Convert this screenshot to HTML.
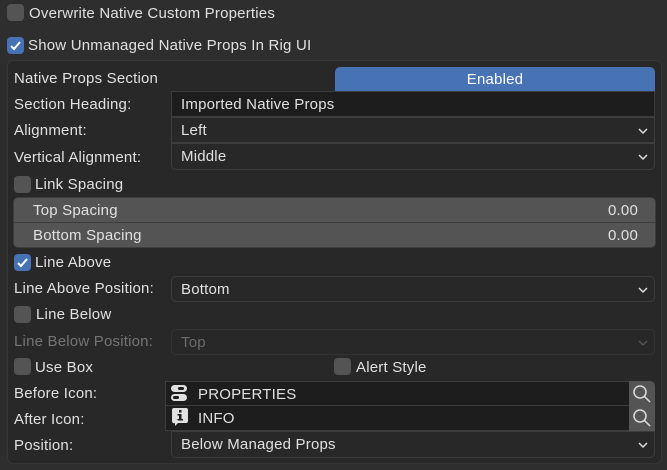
<!DOCTYPE html>
<html><head><style>
body{margin:0;width:667px;height:470px;background:#2e2e2e;font-family:"Liberation Sans",sans-serif;font-size:15px;letter-spacing:0.2px;color:#e0e0e0;position:relative;overflow:hidden}
div{box-sizing:border-box}
.a{position:absolute}
.cb{position:absolute;width:17px;height:17px;border-radius:4px;background:#545454}
.cb.on{background:#4772b3}
.cb.on svg{position:absolute;left:2px;top:2px}
.t{position:absolute;line-height:18px;white-space:nowrap;margin-top:1px}
.box{position:absolute;left:7px;top:60px;width:655px;height:404px;background:#282828;border:1px solid #363636;border-radius:6px}
.f{position:absolute;background:#282828;border:1px solid #3d3d3d;line-height:25px;padding-left:9px}
.f.dark{background:#1d1d1d}
.chev{position:absolute;right:4px;top:0}
.sl{position:absolute;background:#545454;line-height:25px;padding-left:19px;border:1px solid #3d3d3d}
.sl span{position:absolute;right:17px}
</style></head><body>
<div class="cb" style="left:7px;top:4px"></div>
<div class="t" style="left:29px;top:4px">Overwrite Native Custom Properties</div>
<div class="cb on" style="left:7px;top:37px"><svg width="13" height="13" viewBox="0 0 13 13"><path d="M2 7l3 3 6-7" stroke="#fff" stroke-width="2" fill="none"/></svg></div>
<div class="t" style="left:28px;top:36px">Show Unmanaged Native Props In Rig UI</div>
<div class="box"></div>
<div class="t" style="left:14px;top:69px">Native Props Section</div>
<div class="a" style="left:335px;top:67px;width:320px;height:24px;background:#4772b3;border-radius:5px 5px 0 0;text-align:center;line-height:25px;color:#fff">Enabled</div>
<div class="t" style="left:14px;top:95px">Section Heading:</div>
<div class="f dark" style="left:171px;top:91px;width:484px;height:26px">Imported Native Props</div>
<div class="t" style="left:14px;top:121px">Alignment:</div>
<div class="f" style="left:171px;top:117px;width:484px;height:26px">Left<svg class="chev" width="14" height="24"><path d="M3 11l4 4 4-4" stroke="#ddd" stroke-width="1.5" fill="none"/></svg></div>
<div class="t" style="left:14px;top:148px">Vertical Alignment:</div>
<div class="f" style="left:171px;top:143px;width:484px;height:27px;border-radius:0 0 5px 5px">Middle<svg class="chev" width="14" height="24"><path d="M3 11l4 4 4-4" stroke="#ddd" stroke-width="1.5" fill="none"/></svg></div>
<div class="cb" style="left:14px;top:176px"></div>
<div class="t" style="left:35px;top:175px">Link Spacing</div>
<div class="sl" style="left:13px;top:197px;width:643px;height:26px;border-radius:5px 5px 0 0">Top Spacing<span>0.00</span></div>
<div class="sl" style="left:13px;top:222px;width:643px;height:26px;border-radius:0 0 5px 5px">Bottom Spacing<span>0.00</span></div>
<div class="cb on" style="left:14px;top:254px"><svg width="13" height="13" viewBox="0 0 13 13"><path d="M2 7l3 3 6-7" stroke="#fff" stroke-width="2" fill="none"/></svg></div>
<div class="t" style="left:35px;top:253px">Line Above</div>
<div class="t" style="left:14px;top:279px">Line Above Position:</div>
<div class="f" style="left:171px;top:276px;width:484px;height:26px;border-radius:5px">Bottom<svg class="chev" width="14" height="24"><path d="M3 11l4 4 4-4" stroke="#ddd" stroke-width="1.5" fill="none"/></svg></div>
<div class="cb" style="left:14px;top:306px"></div>
<div class="t" style="left:36px;top:305px">Line Below</div>
<div class="t" style="left:14px;top:332px;color:#747474">Line Below Position:</div>
<div class="f" style="left:171px;top:329px;width:484px;height:26px;border-radius:5px;color:#6a6a6a;border-color:#333">Top<svg class="chev" width="14" height="24"><path d="M3 11l4 4 4-4" stroke="#555" stroke-width="1.5" fill="none"/></svg></div>
<div class="cb" style="left:14px;top:358px"></div>
<div class="t" style="left:35px;top:358px">Use Box</div>
<div class="cb" style="left:334px;top:358px"></div>
<div class="t" style="left:356px;top:358px">Alert Style</div>
<div class="t" style="left:14px;top:384px">Before Icon:</div>
<div class="f dark" style="left:165px;top:381px;width:465px;height:25px;padding-left:32px">PROPERTIES</div>
<svg class="a" style="left:170px;top:384px" width="18" height="19"><rect x="1" y="1" width="16" height="7" rx="3.5" fill="#e0e0e0"/><rect x="8" y="3" width="6" height="3" rx="1.5" fill="#1d1d1d"/><rect x="1" y="10" width="16" height="7" rx="3.5" fill="#e0e0e0"/><rect x="3" y="12" width="6" height="3" rx="1.5" fill="#1d1d1d"/></svg>
<div class="a" style="left:629px;top:381px;width:26px;height:25px;background:#545454;border-radius:0 5px 0 0"><svg width="26" height="25"><circle cx="11" cy="11" r="6" stroke="#ddd" stroke-width="1.5" fill="none"/><path d="M15 15l6 6" stroke="#ddd" stroke-width="1.5"/></svg></div>
<div class="t" style="left:14px;top:410px">After Icon:</div>
<div class="f dark" style="left:165px;top:405px;width:465px;height:26px;padding-left:32px">INFO</div>
<svg class="a" style="left:171px;top:407px" width="18" height="20"><path d="M3 1h12a2 2 0 0 1 2 2v11a2 2 0 0 1-2 2H7l-3 3v-3a2 2 0 0 1-3-2V3a2 2 0 0 1 2-2z" fill="#e0e0e0"/><rect x="8" y="3" width="2.5" height="2.5" fill="#1d1d1d"/><path d="M6.5 7h4v5h1.5v1.5h-5.5V12h1.5V8.5h-1.5z" fill="#1d1d1d"/></svg>
<div class="a" style="left:629px;top:405px;width:26px;height:26px;background:#545454"><svg width="26" height="26"><circle cx="11" cy="11" r="6" stroke="#ddd" stroke-width="1.5" fill="none"/><path d="M15 15l6 6" stroke="#ddd" stroke-width="1.5"/></svg></div>
<div class="t" style="left:14px;top:436px">Position:</div>
<div class="f" style="left:171px;top:431px;width:484px;height:27px;border-radius:0 0 5px 5px">Below Managed Props<svg class="chev" width="14" height="24"><path d="M3 11l4 4 4-4" stroke="#ddd" stroke-width="1.5" fill="none"/></svg></div>
</body></html>
